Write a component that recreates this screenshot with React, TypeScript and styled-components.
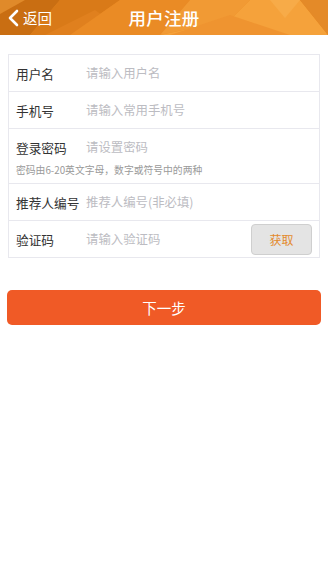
import React from 'react'
import styled, { createGlobalStyle } from 'styled-components'

const Global = createGlobalStyle`
  html, body {
    margin: 0;
    padding: 0;
    background: #fff;
  }
  body {
    font-family: "Noto Sans CJK SC", "Liberation Sans", sans-serif;
  }
`

const Page = styled.div`
  width: 328px;
  min-height: 566px;
  background: #fff;
`

const Header = styled.div`
  position: relative;
  height: 35px;
  overflow: hidden;
  background: #e8861f;
  display: flex;
  align-items: center;
  justify-content: center;
`

const HeaderArt = styled.svg`
  position: absolute;
  inset: 0;
  width: 100%;
  height: 100%;
`

const Back = styled.div`
  position: absolute;
  left: 7px;
  top: 0;
  bottom: 0;
  display: flex;
  align-items: center;
  gap: 4px;
  color: #fff;
  font-size: 14.5px;
`

const Title = styled.div`
  position: relative;
  color: #fff;
  font-size: 17.5px;
  font-weight: 500;
  letter-spacing: 0.3px;
`

const Form = styled.div`
  margin: 19px 8px 0;
  border: 1px solid #e8e8ee;
`

const Row = styled.div<{ $last?: boolean }>`
  border-bottom: ${({ $last }) => ($last ? 'none' : '1px solid #e8e8ee')};
  padding: 0 7px 0 7px;
`

const Line = styled.div`
  height: 36px;
  display: flex;
  align-items: center;
`

const Label = styled.div`
  width: 70px;
  flex-shrink: 0;
  font-size: 12.7px;
  color: #333;
`

const Input = styled.div`
  flex: 1;
  font-size: 12.4px;
  color: #bcbcc2;
`

const Hint = styled.div`
  font-size: 9.8px;
  line-height: 14px;
  color: #9a9a9a;
  margin-top: -2px;
  padding-bottom: 6px;
`

const CodeButton = styled.div`
  width: 61px;
  height: 31px;
  border: 1px solid #cfcfcf;
  border-radius: 4px;
  background: #e4e4e4;
  color: #e38a2c;
  font-size: 12px;
  display: flex;
  align-items: center;
  justify-content: center;
  box-sizing: border-box;
`

const NextButton = styled.div`
  margin: 32px 7px 0;
  height: 35px;
  border-radius: 5px;
  background: #f05a26;
  color: #fff;
  font-size: 14.5px;
  display: flex;
  align-items: center;
  justify-content: center;
`

export default function App() {
  return (
    <Page>
      <Global />
      <Header>
        <HeaderArt viewBox="0 0 328 35" preserveAspectRatio="none">
          <rect x="0" y="0" width="328" height="35" fill="#e8861f" />
          <polygon points="0,0 60,0 30,35 0,35" fill="#c96e12" />
          <polygon points="60,0 120,0 70,35 30,35" fill="#d97a18" />
          <polygon points="0,0 25,0 0,14" fill="#e08a2a" />
          <polygon points="45,35 95,10 130,35" fill="#e0801e" />
          <polygon points="120,0 190,0 160,35 70,35" fill="#ea8b25" />
          <polygon points="190,0 250,0 230,20 160,35" fill="#f19a34" />
          <polygon points="230,20 250,0 300,0 328,35 160,35" fill="#f5a23b" />
          <polygon points="230,15 290,35 170,35" fill="#ef9430" />
          <polygon points="300,0 328,0 328,35" fill="#e48a28" />
          <polygon points="270,0 300,0 285,18" fill="#f7ab48" />
        </HeaderArt>
        <Back>
          <svg width="12" height="18" viewBox="0 0 12 18">
            <path d="M10 2 L3 9 L10 16" fill="none" stroke="#fff" strokeWidth="2.6" strokeLinecap="round" strokeLinejoin="round" />
          </svg>
          <span>返回</span>
        </Back>
        <Title>用户注册</Title>
      </Header>
      <Form>
        <Row>
          <Line>
            <Label>用户名</Label>
            <Input>请输入用户名</Input>
          </Line>
        </Row>
        <Row>
          <Line>
            <Label>手机号</Label>
            <Input>请输入常用手机号</Input>
          </Line>
        </Row>
        <Row>
          <Line>
            <Label>登录密码</Label>
            <Input>请设置密码</Input>
          </Line>
          <Hint>密码由6-20英文字母，数字或符号中的两种</Hint>
        </Row>
        <Row>
          <Line>
            <Label>推荐人编号</Label>
            <Input>推荐人编号(非必填)</Input>
          </Line>
        </Row>
        <Row $last>
          <Line>
            <Label>验证码</Label>
            <Input>请输入验证码</Input>
            <CodeButton>获取</CodeButton>
          </Line>
        </Row>
      </Form>
      <NextButton>下一步</NextButton>
    </Page>
  )
}
